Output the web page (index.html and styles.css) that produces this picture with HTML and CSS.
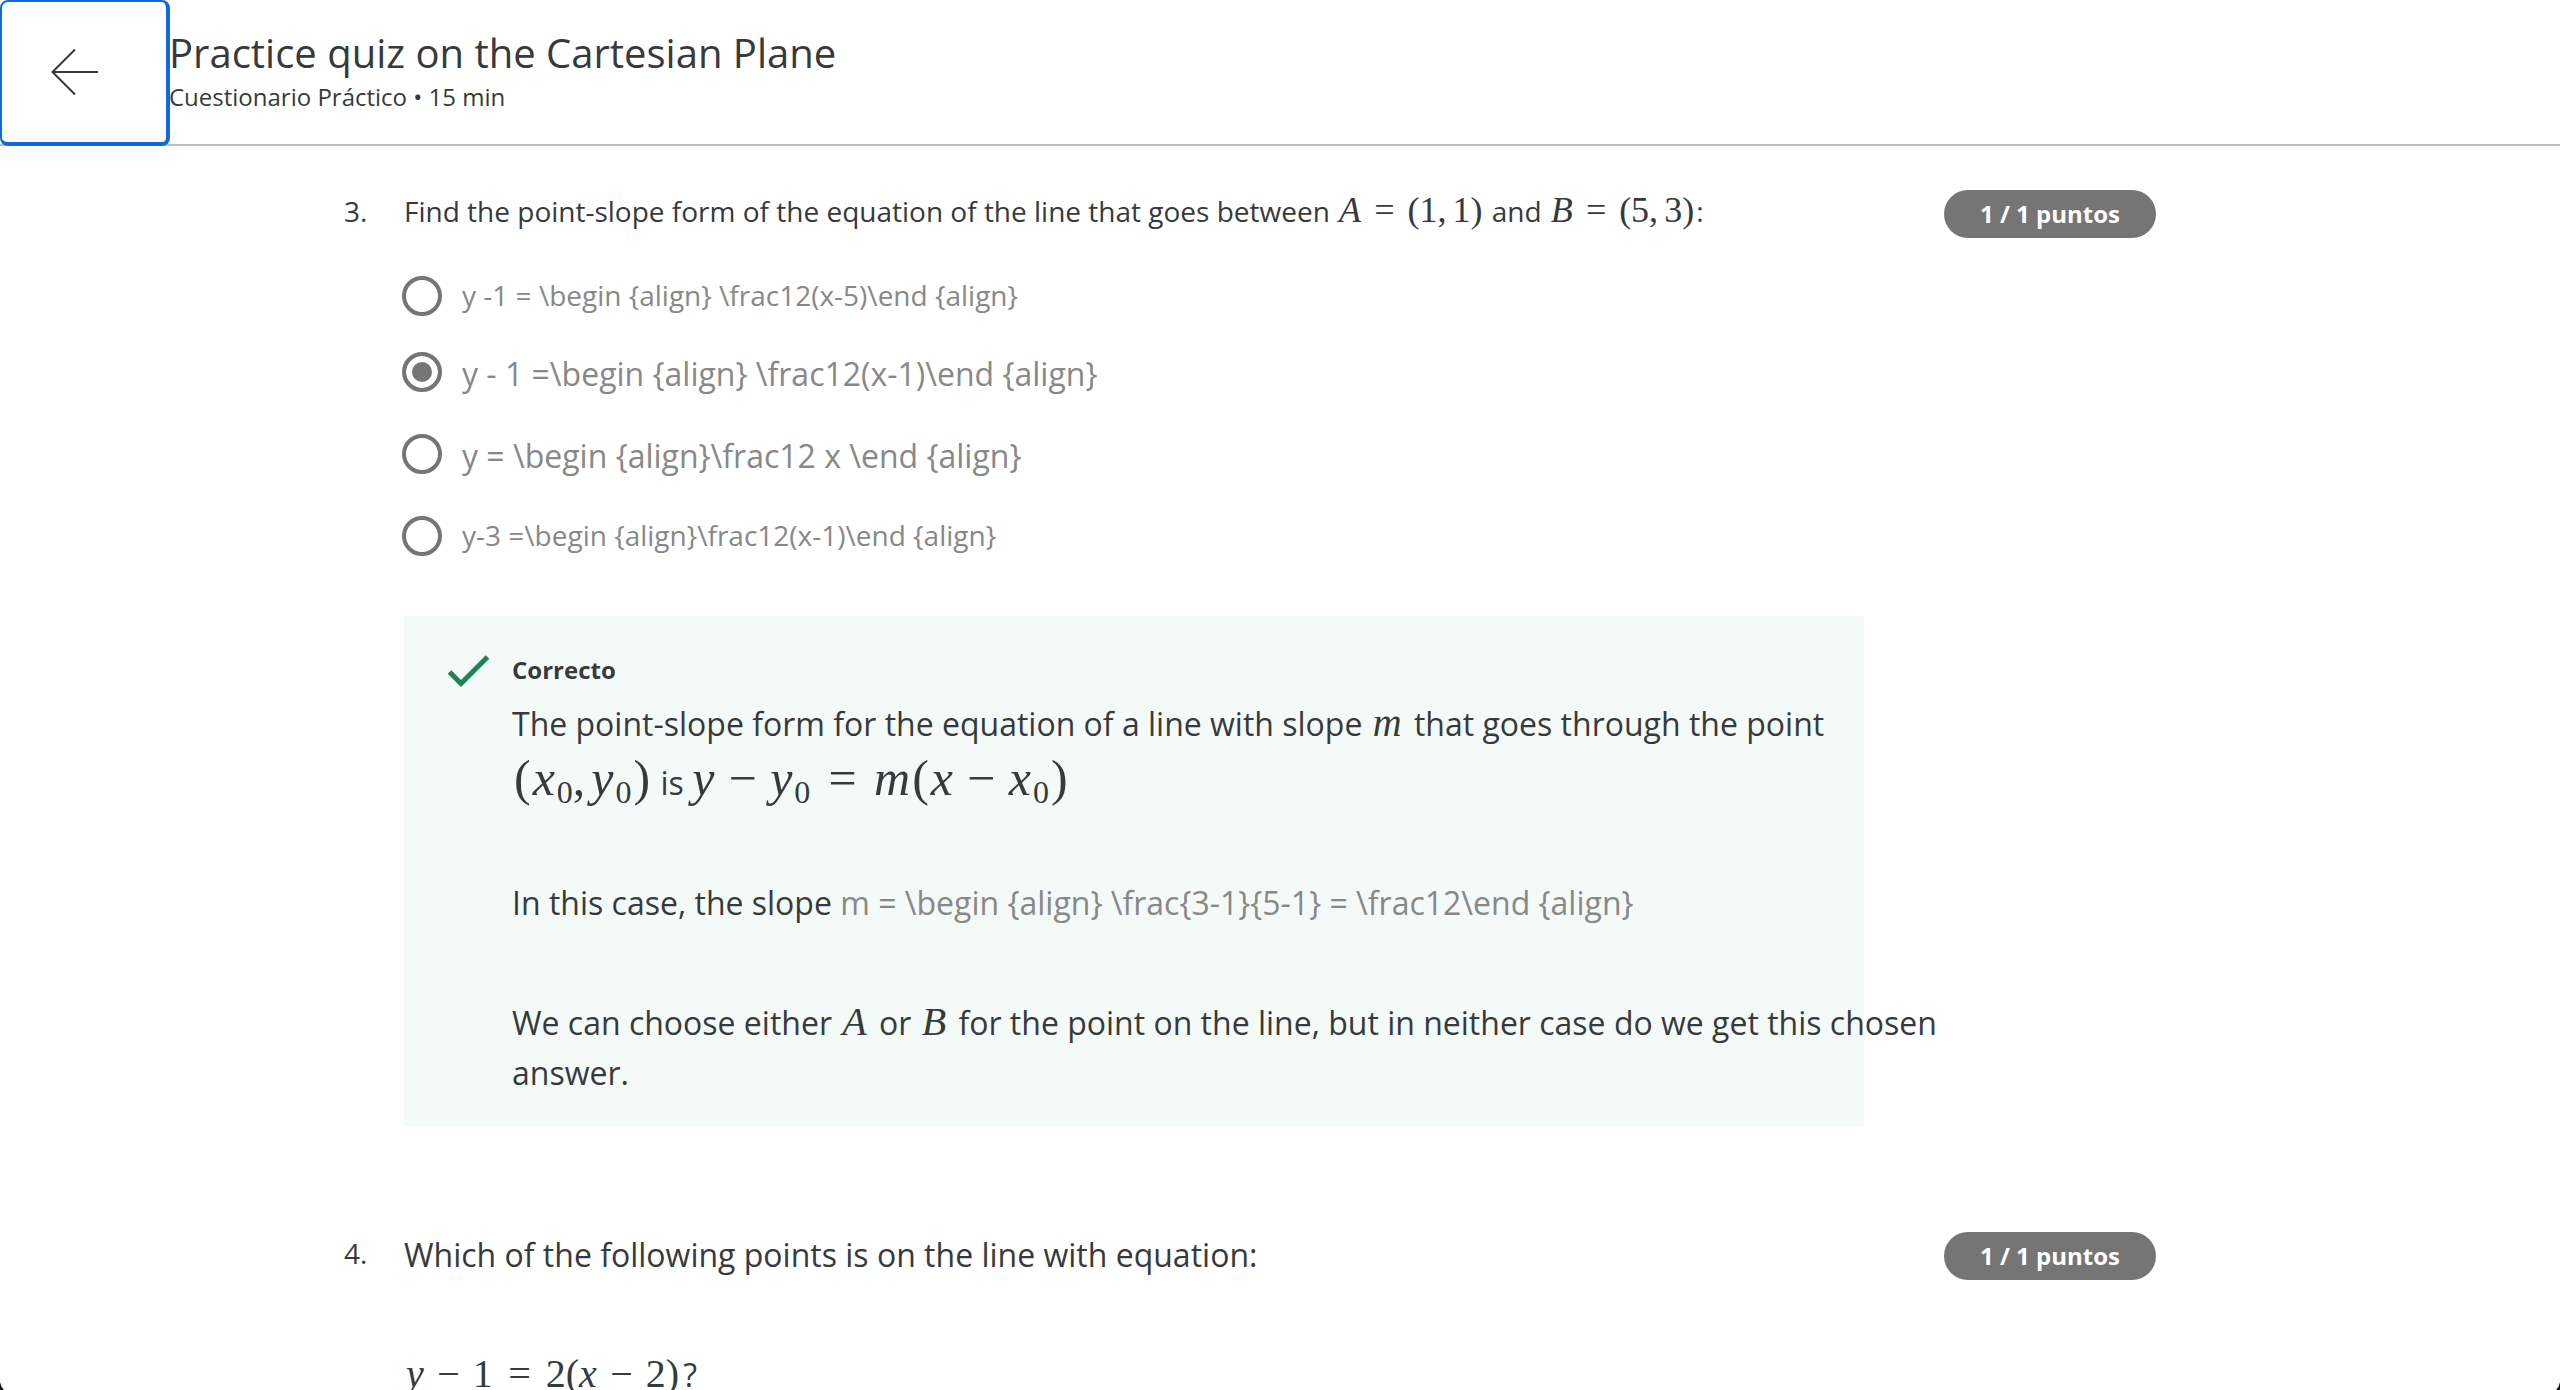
FILE: index.html
```html
<!DOCTYPE html>
<html lang="es">
<head>
<meta charset="utf-8">
<meta name="viewport" content="width=device-width, initial-scale=1">
<title>Practice quiz on the Cartesian Plane</title>
<link rel="stylesheet" href="styles.css">
</head>
<body>
<header class="topbar">
  <button class="back" type="button" aria-label="Atrás">
    <svg class="back-icon" viewBox="0 0 48 48" aria-hidden="true"><path d="M47 24H2M24 1.500L1.500 24L24 46.500"/></svg>
  </button>
  <div class="heading">
    <h1 class="title">Practice quiz on the Cartesian Plane</h1>
    <p class="subtitle">Cuestionario Práctico • 15 min</p>
  </div>
</header>
<main class="quiz">
  <section class="question">
    <span class="number">3.</span>
    <div class="content">
      <p class="prompt">Find the point-slope form of the equation of the line that goes between <span class="math">A<span class="rel">=</span><span class="up">(1,</span><span class="thin up">1)</span></span> and <span class="math">B<span class="rel">=</span><span class="up">(5,</span><span class="thin up">3)</span></span>:</p>
      <div class="options" role="radiogroup" aria-label="Respuestas">
        <label class="option"><input class="radio" type="radio" name="q3"><span>y -1 = \begin {align} \frac12(x-5)\end {align}</span></label>
        <label class="option large"><input class="radio" type="radio" name="q3" checked><span>y - 1 =\begin {align} \frac12(x-1)\end {align}</span></label>
        <label class="option large"><input class="radio" type="radio" name="q3"><span>y = \begin {align}\frac12 x \end {align}</span></label>
        <label class="option"><input class="radio" type="radio" name="q3"><span>y-3 =\begin {align}\frac12(x-1)\end {align}</span></label>
      </div>
      <div class="feedback">
        <svg class="check" viewBox="0 0 42 32" aria-hidden="true"><path d="M2 17L13.500 28.500L40 2"/></svg>
        <div class="explanation">
          <h2 class="verdict">Correcto</h2>
          <p>The point-slope form for the equation of a line with slope <span class="math medium">m</span> that goes through the point <span class="math big"><span class="paren">(</span>x<sub>0</sub><span class="up">,</span><span class="thin">y<sub>0</sub></span><span class="paren">)</span></span> is <span class="math big">y<span class="bin">−</span>y<sub>0</sub><span class="rel">=</span>m<span class="paren">(</span>x<span class="bin">−</span>x<sub>0</sub><span class="paren">)</span></span></p>
          <p>In this case, the slope <span class="raw">m = \begin {align} \frac{3-1}{5-1} = \frac12\end {align}</span></p>
          <p>We can choose either <span class="math medium">A</span> or <span class="math medium">B</span> for the point on the line, but in neither case do we get this chosen answer.</p>
        </div>
      </div>
    </div>
    <span class="points">1 / 1 puntos</span>
  </section>
  <section class="question">
    <span class="number">4.</span>
    <div class="content">
      <p class="prompt large">Which of the following points is on the line with equation:</p>
      <p class="prompt large"><span class="math medium">y<span class="bin">−</span><span class="up">1</span><span class="rel">=</span><span class="up">2(</span>x<span class="bin">−</span><span class="up">2)</span></span>?</p>
    </div>
    <span class="points">1 / 1 puntos</span>
  </section>
</main>
<svg class="corner left" viewBox="0 0 4 8" aria-hidden="true"><path d="M0 0Q1 5 4 8H0Z"/></svg>
<svg class="corner right" viewBox="0 0 4 8" aria-hidden="true"><path d="M4 0Q3 5 0 8H4Z"/></svg>
</body>
</html>
```
FILE: styles.css
```css
* { box-sizing: border-box; }
html, body { height: 100%; }
body {
  margin: 0;
  display: flex;
  flex-direction: column;
  overflow: hidden;
  background: #fff;
  color: #373a3c;
  font-family: "Open Sans", "Noto Sans", sans-serif;
  font-size: 28px;
}
h1, h2, p { margin: 0; font-weight: 400; }

/* Header */
.topbar {
  display: flex;
  flex: none;
  box-shadow: inset 0 -2px #bdbdbd;
}
.back {
  width: 170px;
  margin-right: -1px;
  padding: 0 0 0 49px;
  border: solid #0f6bdc;
  border-width: 2px 4px 4px 2px;
  border-radius: 8px;
  background: #fff;
  display: flex;
  align-items: center;
}
.back-icon { width: 48px; height: 48px; fill: none; stroke: #373a3c; stroke-width: 2; }
.heading { padding: 26px 0 32px; }
.title { font-size: 40px; line-height: 54px; }
.subtitle { font-size: 24px; line-height: 34px; }

/* Questions */
.quiz {
  flex: 1;
  min-height: 0;
  overflow-y: auto;
  scrollbar-width: none;
  padding: 44px 404px 0 344px;
}
.question { display: grid; grid-template-columns: 60px minmax(0, 1fr) auto; margin-bottom: 106px; }
.content { margin-right: 80px; }
.number, .prompt { line-height: 42px; }
.large { font-size: 32px; }
.prompt.large { line-height: 46px; }
.prompt + .prompt { margin-top: 74px; }
.points {
  align-self: start;
  padding: 0 36px;
  border-radius: 24px;
  background: #757575;
  color: #fff;
  font-size: 24px;
  font-weight: 700;
  line-height: 48px;
}

/* Answers */
.options { display: grid; gap: 32px; margin-top: 41px; color: #888; }
.option { display: flex; gap: 20px; line-height: 44px; }
.option.large { line-height: 50px; }
.radio {
  appearance: none;
  flex: none;
  width: 40px;
  height: 40px;
  margin: 3px 0 0 -2px;
  border: 4px solid #757575;
  border-radius: 50%;
  background: #fff;
}
.radio:checked { background: #757575; box-shadow: inset 0 0 0 6px #fff; }

/* Feedback */
.feedback {
  display: flex;
  gap: 22px;
  margin-top: 59px;
  padding: 36px 0 28px 43px;
  background: #f4faf8;
}
.check { flex: none; width: 43px; height: 32px; margin-top: 3px; fill: none; stroke: #1f8354; stroke-width: 5; }
.explanation { flex: 1; margin-right: -80px; font-size: 32px; line-height: 50px; }
.explanation p + p { margin-top: 70px; }
.verdict { margin-bottom: 11px; font-size: 24px; font-weight: 700; line-height: 36px; }
.raw { color: #888; }

/* Formulas */
.math {
  margin: 0 2px;
  font-family: "Liberation Serif", serif;
  font-style: italic;
  font-size: 36px;
  line-height: 36px;
  white-space: nowrap;
}
.medium { margin: 0 4px 0 2px; font-size: 40px; line-height: 40px; }
.big { margin: 0; font-size: 50px; line-height: 58px; }
.math sub { margin-left: 2px; font-size: 32px; font-style: normal; line-height: 16px; vertical-align: -8px; }
.up, .paren { font-style: normal; }
.paren { margin: 0 2px; }
.rel { margin: 0 11px; }
.bin { margin: 0 9px; }
.medium .rel { margin: 0 13px; }
.big .rel { margin: 0 15px; }
.medium .bin, .big .bin { margin: 0 11px; }
.thin { margin-left: 6px; }

/* Rounded window corners */
.corner { position: absolute; bottom: 0; width: 4px; height: 8px; fill: #1a1510; }
.left { left: 0; }
.right { right: 0; }
```
